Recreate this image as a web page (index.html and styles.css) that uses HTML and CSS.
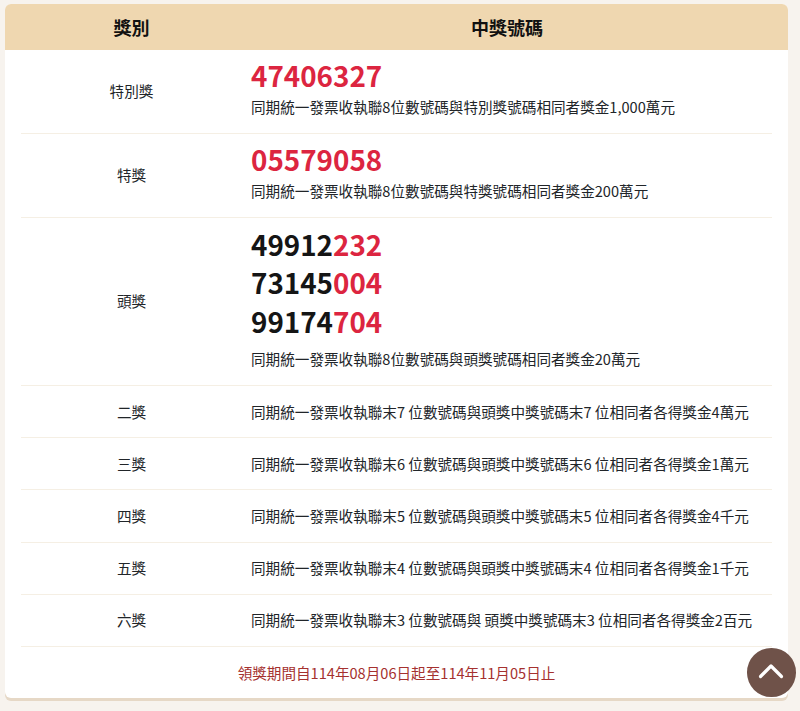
FILE: index.html
```html
<!DOCTYPE html>
<html lang="zh-Hant">
<head>
<meta charset="utf-8">
<title>統一發票中獎號碼</title>
<link rel="stylesheet" href="styles.css">
</head>
<body>
<main class="card">
  <div class="head">
    <div class="head-a">獎別</div>
    <div class="head-b">中獎號碼</div>
  </div>
  <div class="rows">
    <section class="row row-big">
      <div class="name">特別獎</div>
      <div class="info">
        <p class="num red">47406327</p>
        <p class="desc">同期統一發票收執聯8位數號碼與特別獎號碼相同者獎金1,000萬元</p>
      </div>
    </section>
    <section class="row row-big">
      <div class="name">特獎</div>
      <div class="info">
        <p class="num red">05579058</p>
        <p class="desc">同期統一發票收執聯8位數號碼與特獎號碼相同者獎金200萬元</p>
      </div>
    </section>
    <section class="row row-top">
      <div class="name">頭獎</div>
      <div class="info">
        <p class="num">49912<span class="red">232</span></p>
        <p class="num">73145<span class="red">004</span></p>
        <p class="num">99174<span class="red">704</span></p>
        <p class="desc desc-top">同期統一發票收執聯8位數號碼與頭獎號碼相同者獎金20萬元</p>
      </div>
    </section>
    <section class="row">
      <div class="name">二獎</div>
      <div class="info"><p class="desc">同期統一發票收執聯末7 位數號碼與頭獎中獎號碼末7 位相同者各得獎金4萬元</p></div>
    </section>
    <section class="row">
      <div class="name">三獎</div>
      <div class="info"><p class="desc">同期統一發票收執聯末6 位數號碼與頭獎中獎號碼末6 位相同者各得獎金1萬元</p></div>
    </section>
    <section class="row">
      <div class="name">四獎</div>
      <div class="info"><p class="desc">同期統一發票收執聯末5 位數號碼與頭獎中獎號碼末5 位相同者各得獎金4千元</p></div>
    </section>
    <section class="row">
      <div class="name">五獎</div>
      <div class="info"><p class="desc">同期統一發票收執聯末4 位數號碼與頭獎中獎號碼末4 位相同者各得獎金1千元</p></div>
    </section>
    <section class="row">
      <div class="name">六獎</div>
      <div class="info"><p class="desc">同期統一發票收執聯末3 位數號碼與 頭獎中獎號碼末3 位相同者各得獎金2百元</p></div>
    </section>
  </div>
  <p class="foot">領獎期間自114年08月06日起至114年11月05日止</p>
</main>
<a class="top" href="#" aria-label="回到頂端">
  <svg class="top-icon" viewBox="0 0 26 16" width="26" height="16"><path d="M2.5 13.5 13 3l10.5 10.5" fill="none" stroke="#fff" stroke-width="3.2" stroke-linecap="round" stroke-linejoin="round"/></svg>
</a>
</body>
</html>
```
FILE: styles.css
```css
* { box-sizing: border-box; }
html, body { margin: 0; padding: 0; }
body {
  background: #f7f3ee;
  font-family: "Noto Sans CJK TC", "Noto Sans", sans-serif;
  color: #212529;
  height: 711px;
  overflow: hidden;
  padding: 4px 12px 0 5px;
}
p { margin: 0; }
.card {
  background: #fff;
  border-radius: 6px;
  box-shadow: 0 3px 0 #e6d8c6;
  overflow: hidden;
  height: 694px;
}
.head {
  display: grid;
  grid-template-columns: 221px 1fr;
  padding: 0 16px;
  height: 45.5px;
  background: #efd7b0;
  align-items: center;
  font-size: 18px;
  font-weight: 700;
  color: #111;
  text-align: center;
}
.rows { padding: 0.5px 16px 0; }
.row {
  display: grid;
  grid-template-columns: 221px 1fr;
  align-items: center;
  height: 52.2px;
  border-bottom: 1px solid #f5efe4;
}
.row-big { height: 84px; }
.row-top { height: 168px; }
.row-big .name, .row-top .name { padding-bottom: 2px; }
.name { text-align: center; font-size: 14.6px; line-height: 22px; }
.info { padding-left: 9px; }
.row-big .info { padding-bottom: 9px; }
.row-top .info { padding-bottom: 8px; }
.num {
  font-size: 27.8px;
  font-weight: 700;
  line-height: 38.5px;
  color: #151515;
}
.num.red, .red { color: #dc2540; }
.desc { font-size: 14.6px; line-height: 22px; white-space: nowrap; }
.row-big .desc { margin-top: 1px; }
.desc-top { margin-top: 8px; }
.foot {
  text-align: center;
  font-size: 14.6px;
  line-height: 22px;
  color: #a5312f;
  padding-top: 15px;
}
.top {
  position: fixed;
  left: 747px;
  top: 648px;
  width: 48.5px;
  height: 48.5px;
  border-radius: 50%;
  background: #6f5249;
  display: flex;
  align-items: center;
  justify-content: center;
}
.top-icon { display: block; margin-bottom: 3px; }
```
